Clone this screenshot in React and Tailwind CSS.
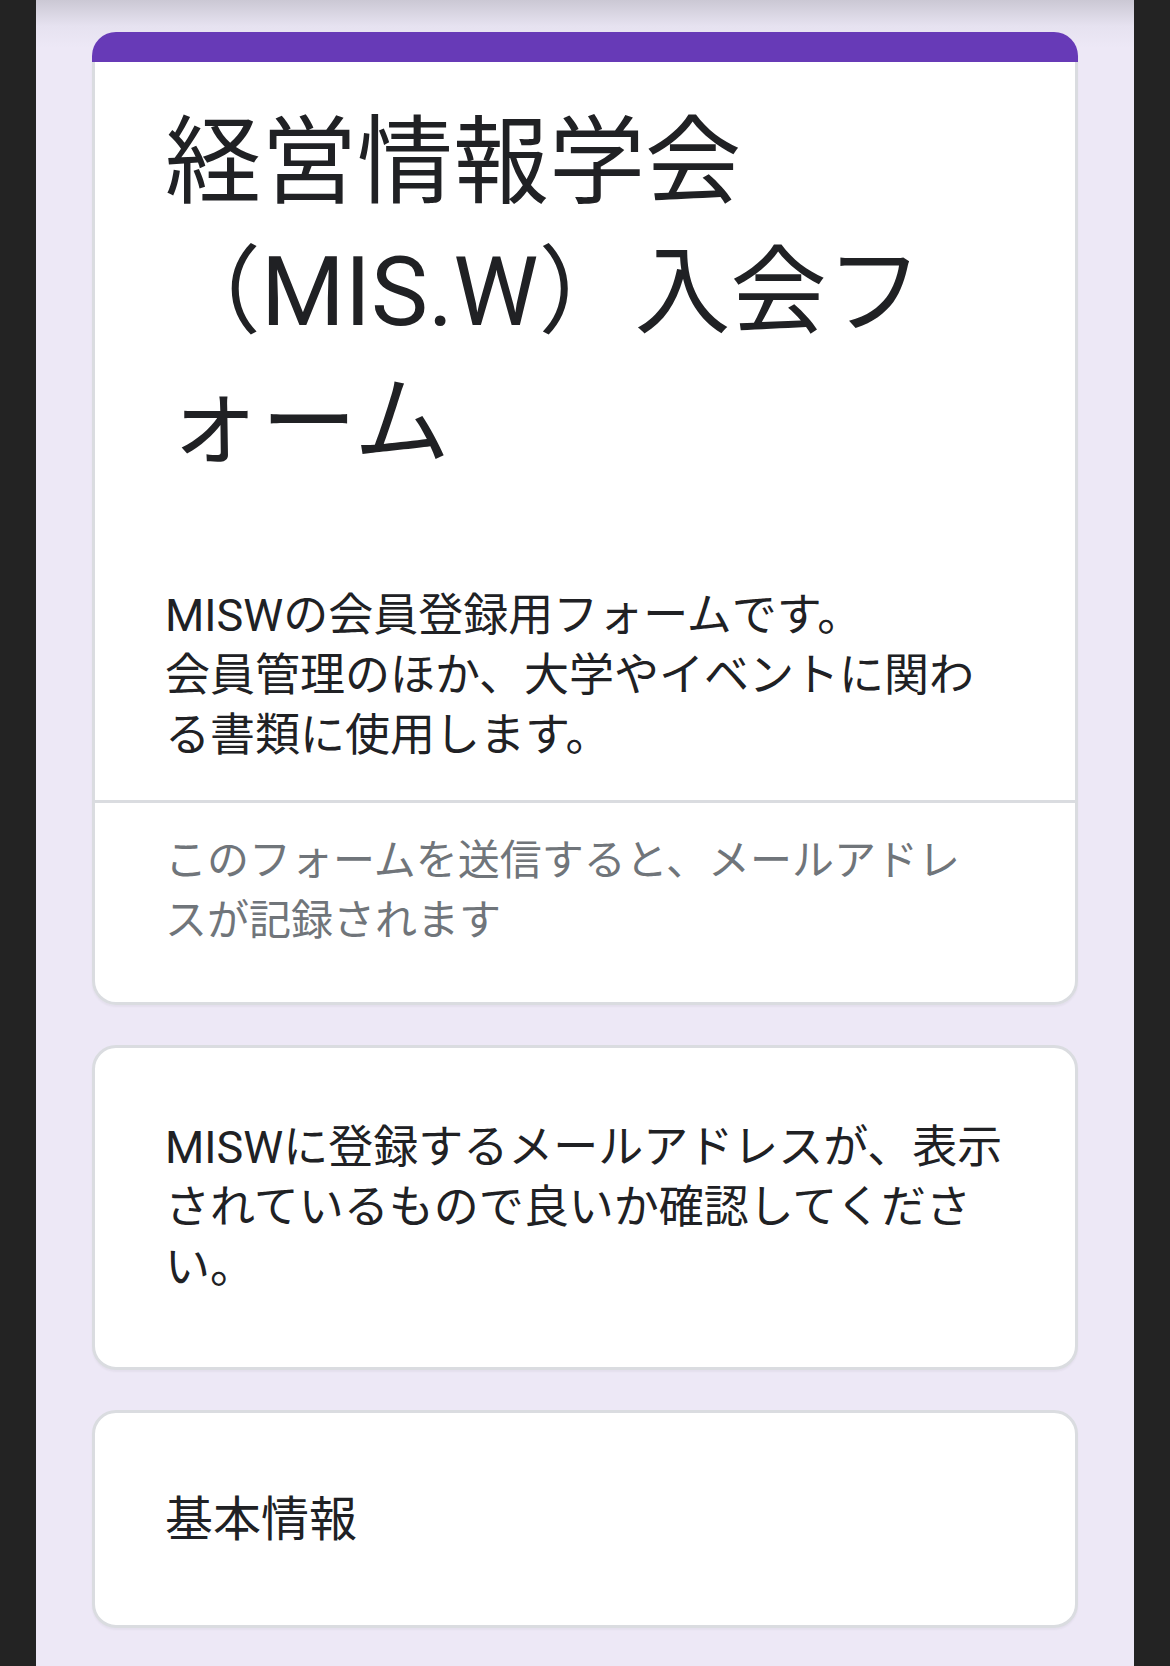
import React from 'react';

const font = "font-['Roboto','Noto_Sans_CJK_JP',sans-serif]";

const Card = ({ children, className = '' }) => (
  <div className={`bg-white border-[3px] border-[#dadce0] rounded-[24px] shadow-[0_2px_2px_rgba(0,0,0,0.04)] ${className}`}>
    {children}
  </div>
);

const App = () => {
  return (
    <div className={`flex w-full h-[1666px] overflow-hidden ${font}`}>
      <div className="w-[36px] shrink-0 bg-[#232323]" />

      <main className="flex-1 flex flex-col gap-[40px] px-[56px] pt-[32px] bg-[linear-gradient(to_bottom,#cbc8d4_0px,#e6e2f0_26px,#ede8f6_48px)]">
        {/* header card */}
        <div className="flex flex-col rounded-[24px] shadow-[0_2px_2px_rgba(0,0,0,0.04)]">
          <div className="h-[30px] bg-[#673ab7] rounded-t-[24px]" />
          <div className="bg-white border-x-[3px] border-b-[3px] border-[#dadce0] rounded-b-[24px]">
            <div className="px-[70px] pt-[35px] pb-[34px]">
              <h1 className="text-[96px] leading-[130px] text-[#202124] font-normal">
                <span className="block whitespace-nowrap">経営情報学会</span>
                <span className="block whitespace-nowrap">（MIS.W）入会フ</span>
                <span className="block whitespace-nowrap">ォーム</span>
              </h1>
              <p className="mt-[99px] text-[45px] leading-[60px] text-[#202124]">
                MISWの会員登録用フォームです。
                <br />
                会員管理のほか、大学やイベントに関わ
                <br />
                る書類に使用します。
              </p>
            </div>
            <div className="h-[3px] bg-[#dadce0]" />
            <p className="px-[70px] pt-[28px] pb-[51px] text-[42px] leading-[60px] text-[#70757a]">
              このフォームを送信すると、メールアドレ
              <br />
              スが記録されます
            </p>
          </div>
        </div>

        <Card className="px-[70px] pt-[70px] pb-[69px]">
          <p className="text-[45px] leading-[60px] text-[#202124] whitespace-nowrap">
            MISWに登録するメールアドレスが、表示
            <br />
            されているもので良いか確認してくださ
            <br />
            い。
          </p>
        </Card>

        <Card className="px-[70px] pt-[71px] pb-[69px]">
          <h2 className="text-[48px] leading-[72px] text-[#202124] font-normal">基本情報</h2>
        </Card>
      </main>

      <div className="w-[36px] shrink-0 bg-[#232323]" />
    </div>
  );
};

export default App;
